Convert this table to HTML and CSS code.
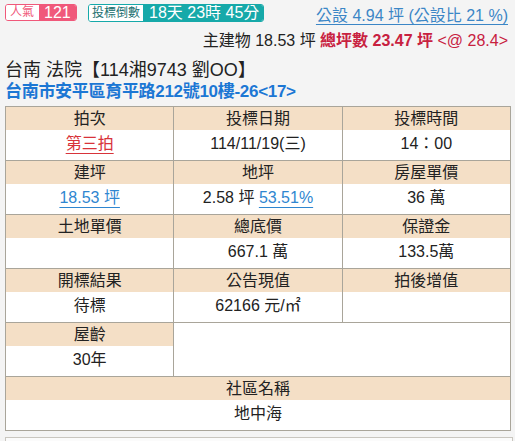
FILE: index.html
```html
<!DOCTYPE html>
<html lang="zh-Hant">
<head>
<meta charset="utf-8">
<link rel="stylesheet" href="styles.css">
</head>
<body>
<div class="page">
  <div class="top">
    <span class="badge pink"><span class="lbl">人氣</span><span class="val">121</span></span>
    <span class="badge teal"><span class="lbl">投標倒數</span><span class="val">18天 23時 45分</span></span>
    <a class="share">公設 4.94 坪 (公設比 21 %)</a>
  </div>
  <div class="area">主建物 18.53 坪 <b class="total">總坪數 23.47 坪</b> <span class="unit">&lt;@ 28.4&gt;</span></div>
  <div class="case">台南 法院【114湘9743 劉OO】</div>
  <div class="addr">台南市安平區育平路212號10樓-26&lt;17&gt;</div>
  <table class="info">
    <tr>
      <td><div class="h">拍次</div><div class="v"><span class="red">第三拍</span></div></td>
      <td><div class="h">投標日期</div><div class="v">114/11/19(三)</div></td>
      <td><div class="h">投標時間</div><div class="v">14：00</div></td>
    </tr>
    <tr>
      <td><div class="h">建坪</div><div class="v"><span class="link">18.53 坪</span></div></td>
      <td><div class="h">地坪</div><div class="v">2.58 坪 <span class="link">53.51%</span></div></td>
      <td><div class="h">房屋單價</div><div class="v">36 萬</div></td>
    </tr>
    <tr>
      <td><div class="h">土地單價</div><div class="v"></div></td>
      <td><div class="h">總底價</div><div class="v">667.1 萬</div></td>
      <td><div class="h">保證金</div><div class="v">133.5萬</div></td>
    </tr>
    <tr>
      <td><div class="h">開標結果</div><div class="v">待標</div></td>
      <td><div class="h">公告現值</div><div class="v">62166 元/㎡</div></td>
      <td><div class="h">拍後增值</div><div class="v"></div></td>
    </tr>
    <tr>
      <td><div class="h">屋齡</div><div class="v">30年</div></td>
      <td colspan="2"></td>
    </tr>
    <tr>
      <td colspan="3"><div class="h">社區名稱</div><div class="v">地中海</div></td>
    </tr>
  </table>
  <div class="next"></div>
</div>
</body>
</html>
```

FILE: styles.css
```css
html, body {
  margin: 0;
  padding: 0;
  background: #f4f4f4;
}
body {
  font-family: "Liberation Sans", "Noto Sans CJK TC", sans-serif;
  color: #222;
}
.page {
  padding: 4px 4px 0 5px;
}
.top {
  display: flex;
  align-items: flex-start;
  height: 22px;
}
.badge {
  display: inline-flex;
  align-items: stretch;
  height: 17px;
  border-radius: 3px;
  overflow: hidden;
  box-sizing: border-box;
}
.badge .lbl {
  background: #fff;
  font-size: 12px;
  line-height: 15px;
  padding: 0 4px;
}
.badge .val {
  color: #fff;
  font-size: 16px;
  line-height: 15px;
}
.pink {
  border: 1px solid #f0587a;
  width: 72px;
}
.pink .lbl {
  color: #f0587a;
  width: 25px;
}
.pink .val {
  background: #f0587a;
  flex: 1;
  padding-left: 5px;
}
.teal {
  border: 1px solid #16a9a9;
  margin-left: 11px;
  height: 18px;
}
.teal .lbl {
  color: #1b6f70;
  padding: 0 3px 0 3px;
  line-height: 16px;
}
.teal .val {
  background: #16a9a9;
  padding: 0 4px 0 6px;
  font-size: 16px;
  line-height: 16px;
}
.share {
  margin-left: auto;
  margin-right: 3px;
  color: #3b86c6;
  font-size: 16px;
  line-height: 18px;
  text-decoration: underline;
  text-underline-offset: 3px;
  margin-top: 3px;
}
.area {
  text-align: right;
  font-size: 16px;
  margin: 6px 3px 0 0;
  line-height: 18px;
}
.total {
  color: #c8213f;
}
.unit {
  color: #c8213f;
}
.case {
  font-size: 18px;
  line-height: 22px;
  margin-top: 9px;
  color: #222;
}
.addr {
  font-size: 17px;
  line-height: 22px;
  font-weight: bold;
  color: #1c77d4;
  letter-spacing: -0.3px;
}
.info {
  width: 506px;
  border-collapse: collapse;
  margin-top: 3px;
  background: #fff;
  table-layout: fixed;
}
.info td {
  border: 1px solid #a9a59a;
  padding: 0;
  text-align: center;
  vertical-align: top;
  font-size: 16px;
}
.h {
  background: #f4dfc6;
  height: 23px;
  line-height: 23px;
}
.v {
  height: 30px;
  line-height: 28px;
}
.red {
  color: #d8333a;
  text-decoration: underline;
  text-underline-offset: 4px;
}
.link {
  color: #2f86d0;
  text-decoration: underline;
  text-underline-offset: 4px;
}
.next {
  margin-top: 6px;
  width: 506px;
  height: 10px;
  border: 1px solid #c9c6bf;
  border-bottom: none;
  background: #fbfbfb;
}
```
